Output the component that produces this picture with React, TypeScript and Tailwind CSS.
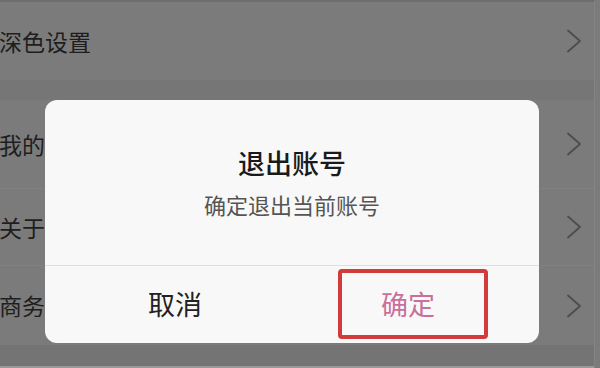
const rows = [
  { label: '我的', h: 'h-[88px]' },
  { label: '关于', h: 'h-[77px]' },
  { label: '商务', h: 'h-[80px]' },
];

const Chevron = () => (
  <svg width="16" height="24" viewBox="0 0 16 24" fill="none" className="shrink-0">
    <path d="M2 1.5 L14 12 L2 22.5" stroke="#4d4d4d" strokeWidth="1.8" strokeLinecap="round" strokeLinejoin="round" />
  </svg>
);

export default function App() {
  return (
    <div
      className="relative w-[600px] h-[368px] overflow-hidden bg-[#7b7b7b] text-[#1e1e1e]"
      style={{ fontFamily: '"Noto Sans CJK SC", "Noto Sans", sans-serif' }}
    >
      {/* settings list behind the mask */}
      <div className="flex flex-col w-[595px] h-full border-r border-[#848484] border-t-2 border-t-[#6e6e6e]">
        <div className="flex items-center justify-between h-[78px] pr-[12px] -ml-[1px]">
          <span className="text-[23px] leading-none">深色设置</span>
          <Chevron />
        </div>
        <div className="h-[20px] bg-[#767676]" />
        {rows.map((r, i) => (
          <div
            key={r.label}
            className={`flex items-center justify-between pr-[12px] -ml-[1px] ${r.h} ${i > 0 ? 'border-t border-[#818181]' : ''}`}
          >
            <span className="text-[23px] leading-none">{r.label}</span>
            <Chevron />
          </div>
        ))}
        <div className="flex-1 bg-[#747474] border-b-2 border-[#9a9a9a]" />
      </div>

      {/* logout dialog */}
      <div className="absolute left-[45px] top-[100px] w-[494px] h-[243px] rounded-[12px] bg-[#f8f8f8] flex flex-col">
        <div className="h-[165px] flex flex-col items-center">
          <div className="mt-[47px] text-[27px] leading-[32px] font-medium text-[#1a1a1a]">退出账号</div>
          <div className="mt-[12px] text-[22px] leading-[26px] text-[#555555]">确定退出当前账号</div>
        </div>
        <div className="h-px bg-[#dedede]" />
        <div className="flex flex-1">
          <div className="w-[260px] flex items-center justify-center text-[27px] text-[#222222]">取消</div>
          <div className="flex-1 pt-[3px]">
            <div className="ml-[33px] w-[150px] h-[70px] border-4 border-[#d33a3a] rounded-[4px] flex items-center justify-center pr-[10px] text-[27px] text-[#c9709a]">
              确定
            </div>
          </div>
        </div>
      </div>
    </div>
  );
}
